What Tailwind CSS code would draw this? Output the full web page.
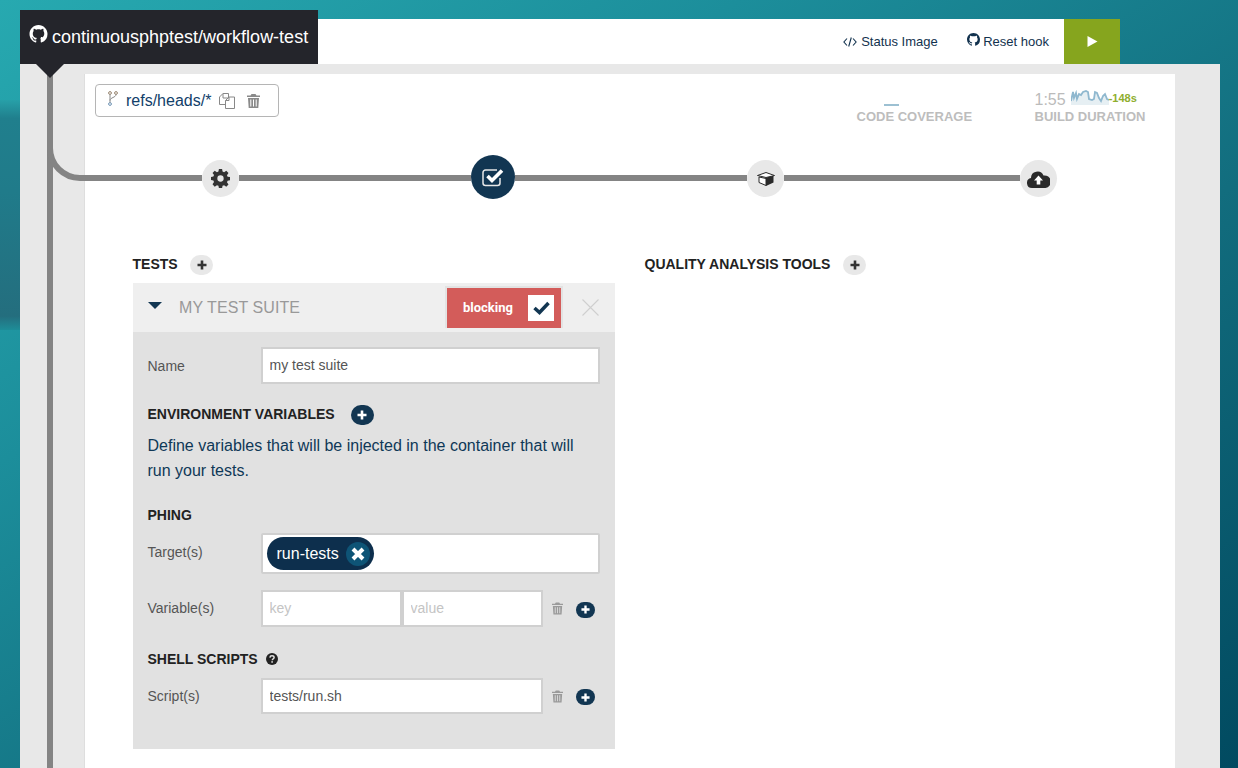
<!DOCTYPE html>
<html lang="en">
<head>
  <meta charset="UTF-8">
  <title>continuousphptest/workflow-test</title>
  <script src="https://cdn.jsdelivr.net/npm/@tailwindcss/browser@4"></script>
</head>
<body class="relative h-[768px] overflow-hidden font-['Liberation_Sans',Arial,sans-serif] bg-[linear-gradient(148deg,#27a9b0_0%,#1c8e9b_30%,#126d7e_62%,#014a60_100%)]">
  <!-- darker band on the left edge of the background -->
  <div class="absolute left-0 top-[100px] h-[230px] w-[20px] bg-[linear-gradient(180deg,#27a0a8_0%,#207f8d_8%,#207b8a_40%,#246e7e_94%,#1e8d98_100%)]"></div>

  <div class="relative ml-[20px] w-[1200px] pt-[19px]">
    <!-- Barra superior -->
    <header class="flex h-[45px] w-[1100px] items-start bg-white">
      <div class="relative z-10 -mt-[9px] flex h-[54px] w-[298px] shrink-0 items-center gap-[4px] bg-[#24252b] pl-[9px] text-[18px] text-white">
        <svg class="-mt-[7px] h-[18px] w-[19px]" viewBox="0 0 16 16" fill="#fff"><path d="M8 0C3.58 0 0 3.58 0 8c0 3.54 2.29 6.53 5.47 7.59.4.07.55-.17.55-.38 0-.19-.01-.82-.01-1.49-2.01.37-2.53-.49-2.69-.94-.09-.23-.48-.94-.82-1.13-.28-.15-.68-.52-.01-.53.63-.01 1.08.58 1.23.82.72 1.21 1.87.87 2.33.66.07-.52.28-.87.51-1.07-1.78-.2-3.64-.89-3.64-3.95 0-.87.31-1.59.82-2.15-.08-.2-.36-1.02.08-2.12 0 0 .67-.21 2.2.82.64-.18 1.32-.27 2-.27s1.36.09 2 .27c1.53-1.04 2.2-.82 2.2-.82.44 1.1.16 1.92.08 2.12.51.56.82 1.27.82 2.15 0 3.07-1.87 3.75-3.65 3.95.29.25.54.73.54 1.48 0 1.07-.01 1.93-.01 2.2 0 .21.15.46.55.38A8.01 8.01 0 0 0 16 8c0-4.42-3.58-8-8-8z"/></svg>
        <span>continuousphptest/workflow-test</span>
      </div>
      <nav class="ml-auto flex h-[45px] items-center text-[13px] text-[#12324e]">
        <span class="flex items-center gap-[4px]">
          <svg class="h-[10px] w-[14px]" viewBox="0 0 14 10" fill="none" stroke="#12324e" stroke-width="1.1"><path d="M4 1.5.9 5 4 8.500M10 1.500 13.100 5 10 8.500M8.300.5 5.700 9.500"/></svg>
          Status Image
        </span>
        <span class="ml-[29.5px] flex items-center gap-[3px]">
          <svg class="-mt-[4px] h-[13px] w-[13px]" viewBox="0 0 16 16" fill="#12324e"><path d="M8 0C3.58 0 0 3.58 0 8c0 3.54 2.29 6.53 5.47 7.59.4.07.55-.17.55-.38 0-.19-.01-.82-.01-1.49-2.01.37-2.53-.49-2.69-.94-.09-.23-.48-.94-.82-1.13-.28-.15-.68-.52-.01-.53.63-.01 1.08.58 1.23.82.72 1.21 1.87.87 2.33.66.07-.52.28-.87.51-1.07-1.78-.2-3.64-.89-3.64-3.95 0-.87.31-1.59.82-2.15-.08-.2-.36-1.02.08-2.12 0 0 .67-.21 2.2.82.64-.18 1.32-.27 2-.27s1.36.09 2 .27c1.53-1.04 2.2-.82 2.2-.82.44 1.1.16 1.92.08 2.12.51.56.82 1.27.82 2.15 0 3.07-1.87 3.75-3.65 3.95.29.25.54.73.54 1.48 0 1.07-.01 1.93-.01 2.2 0 .21.15.46.55.38A8.01 8.01 0 0 0 16 8c0-4.42-3.58-8-8-8z"/></svg>
          Reset hook
        </span>
        <button class="ml-[15px] flex h-[45px] w-[56px] items-center justify-center bg-[#86a51e]">
          <svg class="h-[11px] w-[11px]" viewBox="0 0 11 11" fill="#fff"><path d="M.5 0 10.500 5.500.5 11z"/></svg>
        </button>
      </nav>
    </header>

    <!-- Panel gris -->
    <div class="h-[704px] bg-[#e8e8e8] pl-[65px] pt-[10px]">
      <div class="h-full w-[1090px] bg-white shadow-[-1px_0_0_#dedede]">
        <div class="flex h-[81px] items-start">
          <div class="ml-[10px] mt-[10px] flex h-[33px] w-[184px] items-center rounded-[4px] border border-[#b5b5b5] pl-[12px]">
            <svg class="-mt-[5px] h-[15px] w-[10px]" viewBox="0 0 10 15" fill="none" stroke-width="1"><circle cx="2" cy="2" r="1.400" stroke="#96826c"/><circle cx="8" cy="2" r="1.400" stroke="#96826c"/><circle cx="2" cy="13" r="1.400" stroke="#6d93b4"/><path d="M2 3.500v8M8 3.500c0 3-6 3-6 6" stroke="#8a8a8a"/></svg>
            <span class="ml-[8px] text-[16px] text-[#12406a]">refs/heads/*</span>
            <svg class="ml-[8px] h-[16px] w-[16px]" viewBox="0 0 16 16" fill="#fff" stroke="#888" stroke-width="1"><path d="M.5 4 4 .5h5.500V5H4V.5M.5 4V11.500h6"/><path d="M6.500 7.500 10 4h5.500v11.500h-9zM6.500 7.500H10V4"/></svg>
            <svg class="ml-[12px] h-[14px] w-[13px]" viewBox="0 0 13 14" fill="#8a8a8a"><path d="M4.500 0h4l1 1.500H13V3H0V1.500h3.500zM1 4h11l-.7 10H1.700zm2.300 1.500v7h1v-7zm2.700 0v7h1v-7zm2.700 0v7h1v-7z"/></svg>
          </div>
          <div class="ml-auto mr-[29.5px] mt-[13px] flex gap-[63px]">
            <div class="w-[115px]">
              <div class="flex h-[22px] items-end pb-[3px] pl-[27px]"><span class="h-[2px] w-[15px] bg-[#9cc0d2]"></span></div>
              <div class="whitespace-nowrap text-[13px] font-bold leading-[16px] text-[#bdbdbd]">CODE COVERAGE</div>
            </div>
            <div class="w-[111px]">
              <div class="flex h-[22px] items-end whitespace-nowrap">
                <span class="text-[16px] leading-[18px] text-[#bbb]">1:55</span>
                <svg class="mb-[4px] ml-[5px] h-[16px] w-[38px]" viewBox="0 0 38 16"><path d="M0 12 2 3 3 9 5 4 6 10 8 5 10 6 12 3 15 2 17 3 18 10 21 11 23 10 24 3 26 4 28 9 30 12 32 7 34 5 36 10 38 11V16H0z" fill="#e6eff3"/><path d="M0 12 2 3 3 9 5 4 6 10 8 5 10 6 12 3 15 2 17 3 18 10 21 11 23 10 24 3 26 4 28 9 30 12 32 7 34 5 36 10 38 11" fill="none" stroke="#8fb8cf" stroke-width="1.800"/></svg>
                <span class="mb-[3px] text-[11px] font-bold leading-[16px] text-[#8fae2e]">-148s</span>
              </div>
              <div class="whitespace-nowrap text-[13px] font-bold leading-[16px] text-[#bdbdbd]">BUILD DURATION</div>
            </div>
          </div>
        </div>

        <!-- Pasos -->
        <div class="flex h-[44px] items-center">
          <span class="mt-[2px] h-[6px] w-[117px] bg-[#848484]"></span>
          <span class="mt-[3px] flex h-[37px] w-[37px] items-center justify-center rounded-full bg-[#e8e8e8]">
            <svg class="h-[19px] w-[19px]" viewBox="0 0 24 24" fill="#333"><path fill-rule="evenodd" d="M10 0h4l.6 3.300 1.900.8L19.300 2.200l2.800 2.800-1.900 2.800.8 1.900 3 .5v4l-3 .6-.8 1.900 1.900 2.800-2.800 2.800-2.800-1.900-1.900.8-.6 3h-4l-.6-3-1.900-.8-2.800 1.900L1.900 19.300l1.900-2.800-.8-1.900-3-.6v-4l3-.5.8-1.900L1.900 5l2.800-2.800 2.800 1.900 1.900-.8zM12 8a4 4 0 1 0 0 8 4 4 0 0 0 0-8z"/></svg>
          </span>
          <span class="mt-[2px] h-[6px] w-[232px] bg-[#848484]"></span>
          <span class="flex h-[44px] w-[44px] items-center justify-center rounded-full bg-[#123652]">
            <svg class="h-[21px] w-[24px]" viewBox="0 0 24 21" fill="none"><path d="M19 11v5a2.500 2.500 0 0 1-2.500 2.500h-12A2.500 2.500 0 0 1 2 16V5.500A2.500 2.500 0 0 1 4.500 3H16" stroke="#e8e8e8" stroke-width="1.500"/><path d="M6.500 9l4.500 4.500L21 3.500" stroke="#fff" stroke-width="3.600"/></svg>
          </span>
          <span class="mt-[2px] h-[6px] w-[232px] bg-[#848484]"></span>
          <span class="mt-[3px] flex h-[37px] w-[37px] items-center justify-center rounded-full bg-[#e8e8e8]">
            <svg class="h-[14px] w-[18px]" viewBox="0 0 18 14"><path d="M9 5.500 16.500 3.500V10.500L9 14z" fill="#2a2a2a"/><path d="M9 5.500.5 3.500 9 .5l8.500 3z" fill="#fff" stroke="#2a2a2a" stroke-width="1"/><path d="M2 5v5.500L9 13.500V6.500z" fill="#fff" stroke="#2a2a2a" stroke-width="1"/></svg>
          </span>
          <span class="mt-[2px] h-[6px] w-[236px] bg-[#848484]"></span>
          <span class="mt-[3px] flex h-[37px] w-[37px] items-center justify-center rounded-full bg-[#e8e8e8]">
            <svg class="h-[18px] w-[23px]" viewBox="0 0 23 18"><path d="M5 18a5 5 0 0 1-1-9.900A6.500 6.500 0 0 1 16.500 5.500 6.200 6.200 0 0 1 18.500 18z" fill="#2a2a2a"/><path d="M11.500 5.500 16 10.500h-2.700V14.500H9.700V10.500H7z" fill="#fff"/></svg>
          </span>
        </div>

        <!-- Columnas -->
        <div class="ml-[48px] mt-[55px] flex">
          <section class="w-[482px]">
            <div class="-ml-[0.5px] flex h-[21px] items-center gap-[12.5px]">
              <h2 class="text-[14px] font-bold text-[#222]">TESTS</h2>
              <button class="flex h-[20px] w-[23px] items-center justify-center rounded-full bg-[#e8e8e8]">
                <svg class="h-[10px] w-[10px]" viewBox="0 0 10 10" fill="#333"><path d="M3.700.5h2.600v3.200h3.200v2.600H6.300v3.200H3.700V6.300H.5V3.700h3.200z"/></svg>
              </button>
            </div>

            <div class="mt-[8px] flex h-[49px] items-center bg-[#efefef]">
              <svg class="-mt-[4px] ml-[15px] h-[7px] w-[14px]" viewBox="0 0 14 7" fill="#123652"><path d="M0 0h14L7 7z"/></svg>
              <span class="ml-[17px] text-[16px] tracking-[0.08px] text-[#999]">MY TEST SUITE</span>
              <div class="ml-auto mt-[3px] flex h-[42px] w-[118px] items-center self-start border-2 border-b-0 border-[#e3e3e3] bg-[#d35c5a]">
                <span class="ml-[16px] font-['Roboto',sans-serif] text-[13px] font-bold text-white">blocking</span>
                <span class="ml-auto mr-[7px] flex h-[26px] w-[26px] items-center justify-center bg-white">
                  <svg class="h-[14px] w-[17px]" viewBox="0 0 17 14" fill="none" stroke="#123652" stroke-width="3.500"><path d="M1.500 7l5 4.500L15.500 2"/></svg>
                </span>
              </div>
              <svg class="ml-[19px] mr-[16px] h-[17px] w-[17px]" viewBox="0 0 17 17" fill="none" stroke="#cfcfcf" stroke-width="1.100"><path d="M.5.5l16 16M16.500.5l-16 16"/></svg>
            </div>

            <div class="h-[417px] bg-[#e1e1e1] pl-[14.5px] pr-[15px] pt-[15px] text-[14px] text-[#555]">
              <div class="flex h-[37px] items-center">
                <label class="w-[113.5px] pt-[2px]">Name</label>
                <input value="my test suite" class="h-[37px] w-[339px] border-2 border-[#d0d0d0] bg-white pb-[2px] pl-[6.5px] pr-[7px] text-[#555] outline-none">
              </div>

              <div class="mt-[21px] flex h-[20px] items-center gap-[16px]">
                <h3 class="pb-[2px] font-bold text-[#222]">ENVIRONMENT VARIABLES</h3>
                <button class="flex h-[20px] w-[23px] items-center justify-center rounded-full bg-[#123652]">
                  <svg class="h-[10px] w-[10px]" viewBox="0 0 10 10" fill="#fff"><path d="M3.700.5h2.600v3.200h3.200v2.600H6.300v3.200H3.700V6.300H.5V3.700h3.200z"/></svg>
                </button>
              </div>
              <p class="mt-[8px] text-[16px] leading-[25px] text-[#0f3857]">Define variables that will be injected in the container that will run your tests.</p>

              <h3 class="mt-[22px] flex h-[20px] items-center font-bold text-[#222]">PHING</h3>
              <div class="mt-[8px] flex h-[41px] items-start">
                <label class="w-[113.5px] pt-[9px]">Target(s)</label>
                <div class="flex h-[41px] w-[339px] items-center rounded-[2px] border-2 border-[#d0d0d0] bg-white pl-[4px]">
                  <span class="flex h-[33px] w-[107px] items-center rounded-full bg-[#0d2f4d] pl-[9.5px] text-[16px] text-white">
                    run-tests
                    <span class="ml-[7px] flex h-[24px] w-[24px] items-center justify-center rounded-full bg-[#0e5476]">
                      <svg class="h-[14px] w-[14px]" viewBox="0 0 14 14" fill="none" stroke="#fff" stroke-width="4"><path d="M2 2l10 10M12 2 2 12"/></svg>
                    </span>
                  </span>
                </div>
              </div>

              <div class="mt-[16px] flex h-[37px] items-center">
                <label class="w-[113.5px]">Variable(s)</label>
                <input placeholder="key" class="h-[37px] w-[141px] border-2 border-[#d0d0d0] bg-white pb-[2px] pl-[6.5px] pr-[7px] outline-none placeholder:text-[#c4c4c4]">
                <input placeholder="value" class="h-[37px] w-[141px] border-2 border-[#d0d0d0] bg-white pb-[2px] pl-[6.5px] pr-[7px] outline-none placeholder:text-[#c4c4c4]">
                <svg class="ml-[9px] h-[13px] w-[11px]" viewBox="0 0 13 14" fill="#9a9a9a"><path d="M4.500 0h4l1 1.500H13V3H0V1.500h3.500zM1 4h11l-.7 10H1.700zm2.300 1.500v7h1v-7zm2.700 0v7h1v-7zm2.700 0v7h1v-7z"/></svg>
                <button class="ml-[13px] mt-[2px] flex h-[16px] w-[19px] items-center justify-center rounded-full bg-[#123652]">
                  <svg class="h-[9px] w-[9px]" viewBox="0 0 10 10" fill="#fff"><path d="M3.700.5h2.600v3.200h3.200v2.600H6.300v3.200H3.700V6.300H.5V3.700h3.200z"/></svg>
                </button>
              </div>

              <div class="mt-[22px] flex h-[20px] items-center gap-[8px]">
                <h3 class="font-bold text-[#222]">SHELL SCRIPTS</h3>
                <svg class="h-[12px] w-[12px]" viewBox="0 0 12 12"><circle cx="6" cy="6" r="6" fill="#222"/><path d="M3.900 4.600C4 3.400 4.900 2.800 6 2.800c1.200 0 2.100.7 2.100 1.700 0 1.500-1.800 1.400-1.800 2.700" fill="none" stroke="#e1e1e1" stroke-width="1.500"/><rect x="5.300" y="8.200" width="1.600" height="1.500" fill="#e1e1e1"/></svg>
              </div>
              <div class="mt-[9px] flex h-[36px] items-center">
                <label class="w-[113.5px]">Script(s)</label>
                <input value="tests/run.sh" class="h-[36px] w-[282px] border-2 border-[#d0d0d0] bg-white pl-[6.5px] pr-[7px] text-[#555] outline-none">
                <svg class="ml-[9px] h-[13px] w-[11px]" viewBox="0 0 13 14" fill="#9a9a9a"><path d="M4.500 0h4l1 1.500H13V3H0V1.500h3.500zM1 4h11l-.7 10H1.700zm2.300 1.500v7h1v-7zm2.700 0v7h1v-7zm2.700 0v7h1v-7z"/></svg>
                <button class="ml-[13px] mt-[2px] flex h-[16px] w-[19px] items-center justify-center rounded-full bg-[#123652]">
                  <svg class="h-[9px] w-[9px]" viewBox="0 0 10 10" fill="#fff"><path d="M3.700.5h2.600v3.200h3.200v2.600H6.300v3.200H3.700V6.300H.5V3.700h3.200z"/></svg>
                </button>
              </div>
            </div>
          </section>

          <section class="ml-[29.5px]">
            <div class="flex h-[21px] items-center gap-[13px]">
              <h2 class="text-[14px] font-bold text-[#222]">QUALITY ANALYSIS TOOLS</h2>
              <button class="flex h-[20px] w-[23px] items-center justify-center rounded-full bg-[#e8e8e8]">
                <svg class="h-[10px] w-[10px]" viewBox="0 0 10 10" fill="#333"><path d="M3.700.5h2.600v3.200h3.200v2.600H6.300v3.200H3.700V6.300H.5V3.700h3.200z"/></svg>
              </button>
            </div>
          </section>
        </div>
      </div>
    </div>
  </div>

  <!-- Riel vertical y curva hacia los pasos -->
  <svg class="absolute left-0 top-0" width="90" height="768" viewBox="0 0 90 768" fill="none" stroke="#848484" stroke-width="6">
    <path d="M50 70V768"/>
    <path d="M50 148A30 30 0 0 0 80 178H90"/>
  </svg>
  <div class="absolute left-[36px] top-[64px] h-0 w-0 border-x-[14px] border-t-[14px] border-x-transparent border-t-[#24252b]"></div>
</body>
</html>
